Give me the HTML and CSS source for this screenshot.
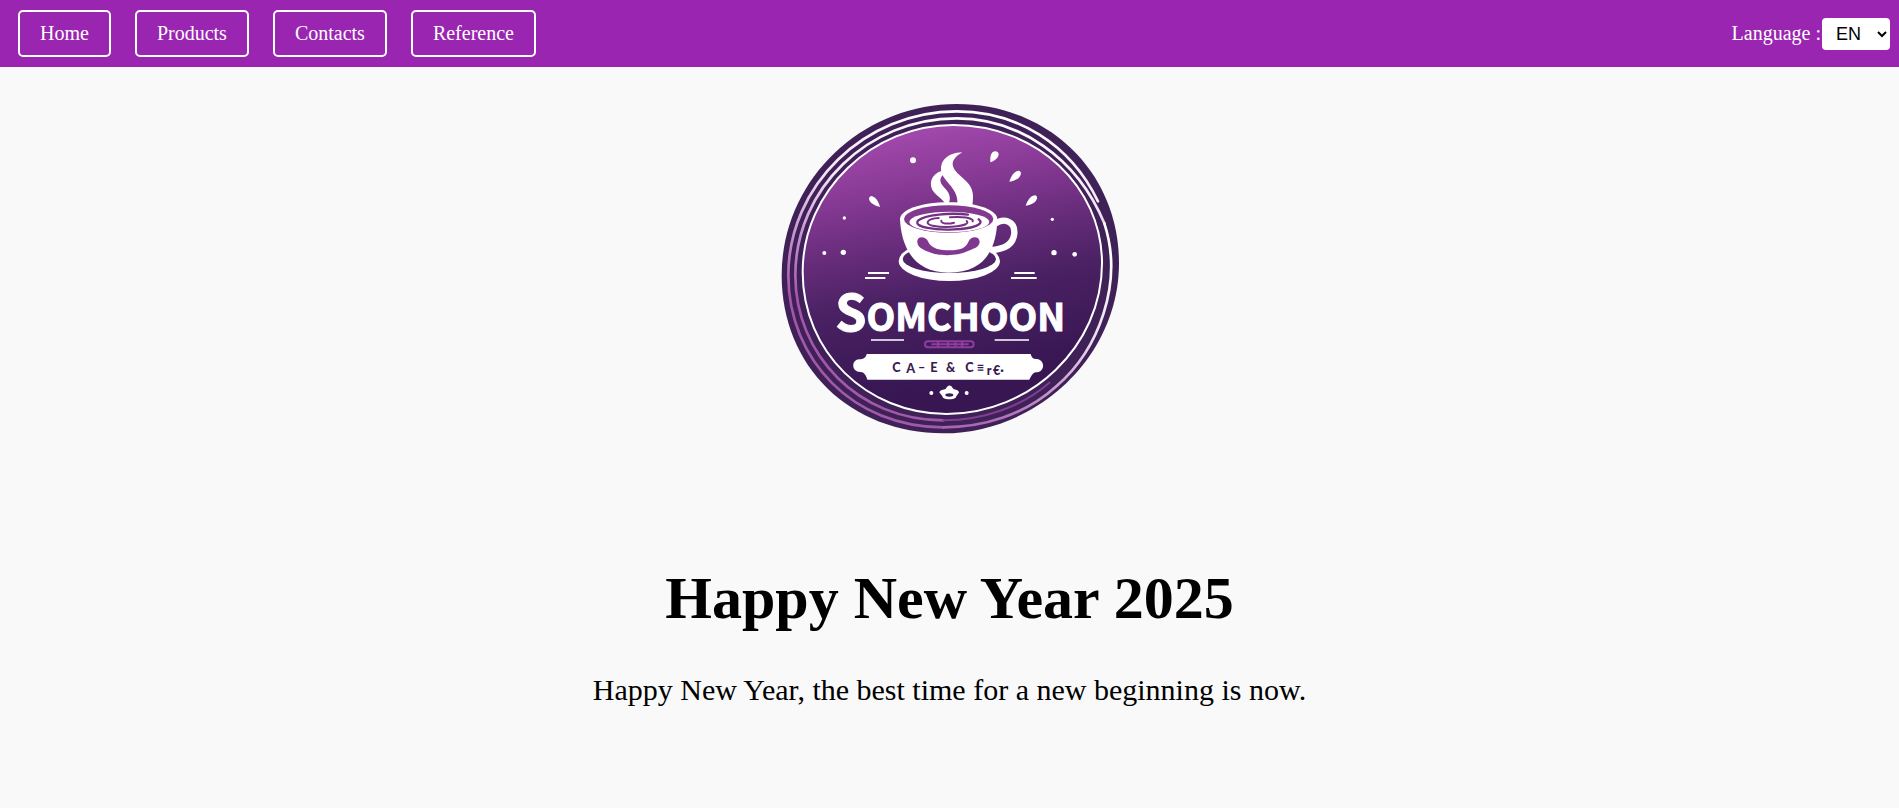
FILE: index.html
```html
<!DOCTYPE html>
<html lang="en">
<head>
<meta charset="utf-8">
<title>Somchoon</title>
<link rel="stylesheet" href="styles.css">
</head>
<body>
<header class="topbar">
  <nav class="nav">
    <a class="nav-link" href="#home">Home</a>
    <a class="nav-link" href="#products">Products</a>
    <a class="nav-link" href="#contacts">Contacts</a>
    <a class="nav-link" href="#reference">Reference</a>
  </nav>
  <div class="language">
    <label for="lang">Language :</label>
    <select id="lang" class="language-select"><option>EN</option><option>TH</option></select>
  </div>
</header>
<main class="hero">
  <svg class="logo" viewBox="0 0 1080 1050" role="img" aria-label="Somchoon logo">
    <defs>
      <linearGradient id="disc" gradientUnits="userSpaceOnUse" x1="440" y1="110" x2="590" y2="880">
        <stop offset="0" stop-color="#a349ae"/>
        <stop offset=".2" stop-color="#8a3b97"/>
        <stop offset=".42" stop-color="#692d7c"/>
        <stop offset=".64" stop-color="#4a2163"/>
        <stop offset="1" stop-color="#371652"/>
      </linearGradient>
      <linearGradient id="ring" gradientUnits="userSpaceOnUse" x1="600" y1="60" x2="480" y2="1010">
        <stop offset="0" stop-color="#fff"/>
        <stop offset=".25" stop-color="#f4e6f6"/>
        <stop offset=".45" stop-color="#c795cf"/>
        <stop offset=".65" stop-color="#a455ab"/>
        <stop offset="1" stop-color="#a05aaa"/>
      </linearGradient>
      <linearGradient id="ringRight" gradientUnits="userSpaceOnUse" x1="0" y1="500" x2="0" y2="1010">
        <stop offset="0" stop-color="#fff"/>
        <stop offset=".5" stop-color="#eadcf0"/>
        <stop offset="1" stop-color="#a866b2"/>
      </linearGradient>
    </defs>
    <path fill="#3f2158" d="M35 556C35 270 275 42 560 42C840 42 1047 250 1047 520C1047 800 800 1030 520 1030C240 1030 35 830 35 556Z"/>
    <g fill="none" stroke-linecap="round">
      <path stroke="url(#ring)" stroke-width="8" d="M984 334C900 160 740 64 560 64C285 64 55 285 55 556C55 810 250 1012 520 1012"/>
      <path stroke="url(#ring)" stroke-width="8" d="M1003 400C920 200 745 85 560 85C295 85 76 295 76 556C76 795 265 991 520 991"/>
      <path stroke="url(#ringRight)" stroke-width="8" d="M1003 400C1062 580 985 780 860 888C765 975 640 1012 520 1012"/>
      <path stroke="#7e3e92" stroke-width="6" d="M520 991C640 991 755 950 838 878"/>
    </g>
    <path fill="url(#disc)" stroke="#fff" stroke-width="6" d="M98 546C98 300 310 105 550 105C800 105 996 290 996 520C996 770 780 972 530 972C290 972 98 785 98 546Z"/>
    <g fill="#fff">
      <circle cx="429" cy="211" r="9"/><circle cx="223" cy="384" r="5"/><circle cx="847" cy="388" r="5"/>
      <circle cx="163" cy="489" r="6"/><circle cx="220" cy="487" r="8"/><circle cx="852" cy="488" r="8"/><circle cx="914" cy="493" r="7"/>
      <circle cx="484" cy="909" r="6"/><circle cx="590" cy="909" r="6"/>
      <path d="M661 217C660 196 664 184 676 184C688 185 688 197 682 203C676 210 670 214 661 217Z"/>
      <path d="M718 275C724 256 734 243 746 242C756 244 754 256 746 264C738 270 730 273 718 275Z"/>
      <path d="M767 347C774 328 784 316 796 316C804 319 802 330 794 337C786 343 778 346 767 347Z"/>
      <path d="M330 351C326 334 316 320 304 318C294 320 296 332 304 339C312 345 320 349 330 351Z"/>
      <path d="M577 187C532 188 508 214 514 245C522 278 568 295 562 346L607 346C615 300 602 284 574 260C540 232 538 210 577 187Z"/>
      <path d="M516 242C482 252 474 284 492 307C512 328 528 334 528 353C546 332 542 312 524 294C504 274 510 262 524 250Z"/>
      <ellipse cx="538" cy="513" rx="152" ry="60"/>
    </g>
    <ellipse cx="538" cy="507" rx="140" ry="42" fill="#502469"/>
    <path fill="none" stroke="#fff" stroke-width="19" d="M674 402C702 382 735 394 733 430C730 462 704 478 662 480"/>
    <path fill="#fff" d="M390 388C390 360 450 337 536 337C620 337 682 360 682 388C680 470 650 548 536 548C430 548 394 470 390 388Z"/>
    <ellipse cx="536" cy="387" rx="134" ry="41" fill="#83398f"/>
    <ellipse cx="538" cy="396" rx="120" ry="31" fill="#fff"/>
    <g fill="none" stroke="#733184" stroke-linecap="round">
      <path stroke-width="7" d="M594 374C540 367 464 374 444 392C428 412 500 421 552 418C610 416 646 402 626 388"/>
      <path stroke-width="6" d="M506 384C470 386 462 402 488 407C532 416 606 408 590 393"/>
      <path stroke-width="6" d="M540 382C574 378 612 384 608 394M514 392C512 401 534 403 552 398"/>
    </g>
    <path fill="#803790" d="M442 452C444 438 468 438 475 456C484 476 510 481 540 481C570 481 588 474 595 456C600 438 628 436 629 455C628 474 606 476 592 484C560 500 500 498 478 486C456 478 440 470 442 452Z"/>
    <path fill="none" stroke="#fff" stroke-width="6" d="M294 549H357M285 564H346M733 549H794M723 564H800"/>
    <path fill="none" stroke="#fff" stroke-width="5" d="M303 750H402M674 750H777"/>
    <g fill="none" stroke="#8f3d9c" stroke-width="6"><rect x="465" y="754" width="146" height="18" rx="9"/><path d="M484 763H596M504 754V772M534 754V772M556 754V772M576 754V772"/></g>
    <text class="logo-name" x="196" y="722"><tspan class="logo-initial">S</tspan>OMCHOON</text>
    <path fill="#fff" d="M290 792H782C784 802 790 808 800 807C826 809 826 847 798 847C788 848 784 858 778 869H292C288 856 282 846 272 846C242 846 244 808 268 808C280 808 288 802 290 792Z"/>
    <g class="logo-tag"><text x="367" y="846">C</text><text x="409" y="848">A</text><text x="444" y="846">–</text><text x="481" y="845">E</text><text x="528" y="846">&amp;</text><text x="586" y="846">C</text><text x="620" y="845">≡</text><text x="650" y="856">r</text><text x="669" y="854">€·</text></g>
    <path fill="#fff" d="M508 907C512 896 526 901 529 894C534 884 543 884 548 894C552 901 564 896 567 907C565 913 560 916 557 923C546 929 530 929 519 923C517 916 511 913 508 907Z"/>
    <ellipse cx="538" cy="915" rx="12" ry="5" fill="#3a1a50"/>
  </svg>
  <h1 class="title">Happy New Year 2025</h1>
  <p class="message">Happy New Year, the best time for a new beginning is now.</p>
</main>
</body>
</html>
```
FILE: styles.css
```css
body {
  margin: 0;
  background: #f9f9f9;
  color: #000;
  font-family: "Liberation Serif", "Times New Roman", serif;
}

.topbar {
  display: flex;
  justify-content: space-between;
  align-items: center;
  padding: 10px 9px 10px 18px;
  background: #9a25b1;
  color: #fff;
  font-size: 20px;
  line-height: 23px;
}

.nav {
  display: flex;
  gap: 24px;
}

.nav-link {
  padding: 10px 20px;
  border: 2px solid #fff;
  border-radius: 5px;
  color: #fff;
  text-decoration: none;
}

.language {
  display: flex;
  align-items: center;
  gap: 1px;
}

.language-select {
  width: 68px;
  height: 32px;
  padding: 0 0 0 10px;
  border: 0;
  border-radius: 4px;
  background: #fff;
  color: #000;
  font-family: "Liberation Sans", Arial, sans-serif;
  font-size: 18px;
}

.hero {
  display: flex;
  flex-direction: column;
  align-items: center;
  padding-top: 23px;
  text-align: center;
}

.logo {
  width: 360px;
  max-width: 100%;
}

.logo-name {
  fill: #fff;
  stroke: #fff;
  stroke-width: 3px;
  font-family: "Noto Sans CJK SC", sans-serif;
  font-size: 112px;
  font-weight: 700;
}

.logo-initial {
  font-size: 150px;
}

.logo-tag {
  fill: #3a1c50;
  font-family: Lato, sans-serif;
  font-size: 38px;
  font-weight: 900;
}

.title {
  margin: 124px 0 40px;
  font-size: 60px;
  line-height: 69px;
}

.message {
  margin: 0;
  font-size: 30px;
  line-height: 34px;
}
```
